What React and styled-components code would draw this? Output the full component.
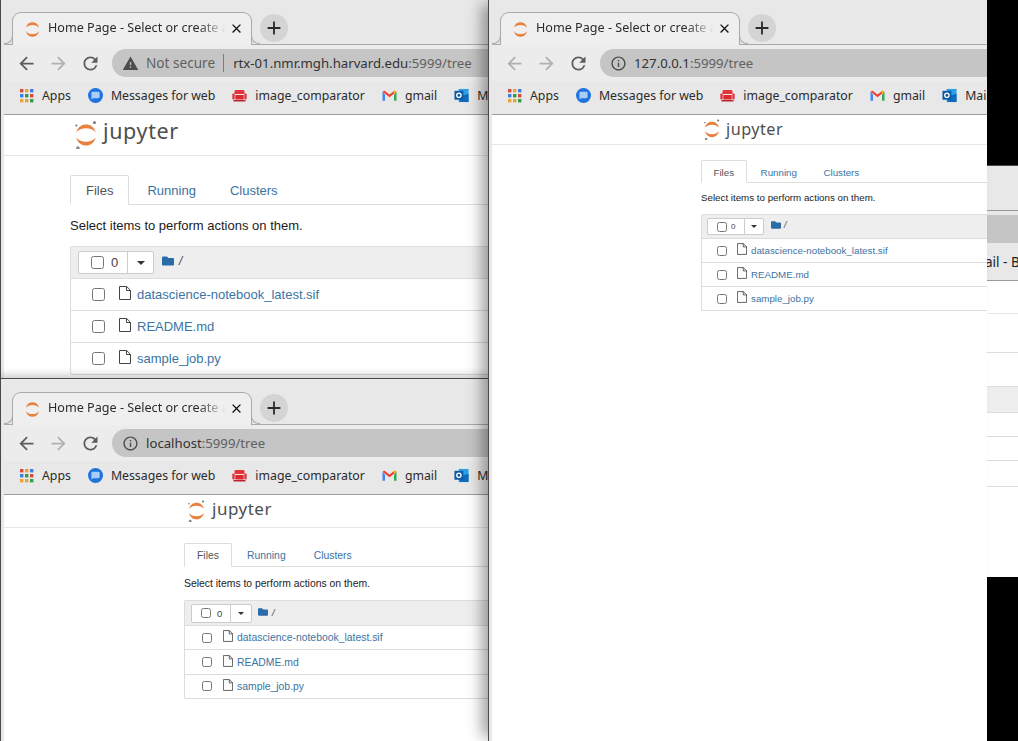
import styled, { createGlobalStyle, ThemeProvider } from 'styled-components';
import { MdArrowBack, MdArrowForward, MdRefresh, MdInfoOutline, MdWarning, MdAdd, MdClose } from 'react-icons/md';
import { FaFolder } from 'react-icons/fa';

const Global = createGlobalStyle`
  html, body { margin: 0; padding: 0; background: #000; }
`;

const chromeFont = `"Noto Sans", "Liberation Sans", sans-serif`;
const pageFont = `"Liberation Sans", Arial, sans-serif`;

const Desktop = styled.div`
  position: relative;
  width: 1018px;
  height: 741px;
  background: #000;
  overflow: hidden;
`;

/* windows on the desktop: their place is the content */
const Win = styled.div`
  position: absolute;
  left: ${(p) => p.$x}px;
  top: ${(p) => p.$y}px;
  width: ${(p) => p.$w}px;
  height: ${(p) => p.$h}px;
  z-index: ${(p) => p.$z};
  display: flex;
  flex-direction: column;
  box-sizing: border-box;
  overflow: hidden;
  background: #e8e8e8;
  border-left: 1px solid #4a4a4a;
  border-right: ${(p) => (p.$edge ? '1px solid #4a4a4a' : 'none')};
  border-top: ${(p) => (p.$top ? '1px solid #4a4a4a' : 'none')};
  box-shadow: ${(p) => p.$shadow || 'none'};
`;

const ShadowWrap = styled.div`
  position: absolute;
  left: ${(p) => p.$x}px;
  top: ${(p) => p.$y}px;
  width: ${(p) => p.$w}px;
  height: ${(p) => p.$h}px;
  z-index: ${(p) => p.$z};
  box-shadow: ${(p) => p.$shadow};
`;

const Chrome = styled.div`
  flex: none;
  font-family: ${chromeFont};
  padding-left: 3px;
`;

const TabStrip = styled.div`
  height: ${(p) => p.theme.stripH}px;
  display: flex;
  align-items: flex-end;
  padding-left: 8px;
  border-bottom: 1px solid #a9a9a9;
`;

const Tab = styled.div`
  position: relative;
  width: 240px;
  height: 33px;
  margin-bottom: -1px;
  background: #efefef;
  border: 1px solid #a9a9a9;
  border-bottom: none;
  border-radius: 9px 9px 0 0;
  display: flex;
  align-items: center;
  box-sizing: border-box;
  padding-left: 12px;
  &::before, &::after {
    content: '';
    position: absolute;
    bottom: 1px;
    width: 8px;
    height: 8px;
    border-bottom: 1px solid #a9a9a9;
  }
  &::before { left: -9px; border-right: 1px solid #a9a9a9; border-bottom-right-radius: 8px; }
  &::after { right: -9px; border-left: 1px solid #a9a9a9; border-bottom-left-radius: 8px; }
`;

const TabTitle = styled.span`
  flex: none;
  width: 180px;
  margin-left: 8px;
  padding-bottom: 3px;
  font-size: 12.6px;
  color: #2b2b2b;
  white-space: nowrap;
  overflow: hidden;
  -webkit-mask-image: linear-gradient(90deg, #000 150px, transparent 178px);
  mask-image: linear-gradient(90deg, #000 150px, transparent 178px);
`;

const TabClose = styled(MdClose)`
  flex: none;
  margin: 0 0 2px 1px;
  font-size: 15px;
  color: #111;
`;

const NewTab = styled.div`
  width: 28px;
  height: 28px;
  margin: 0 0 2px 8px;
  border-radius: 50%;
  background: #d4d4d4;
  display: flex;
  align-items: center;
  justify-content: center;
  font-size: 22px;
  color: #2b2b2b;
`;

const Toolbar = styled.div`
  height: 36px;
  display: flex;
  align-items: center;
  background: #ececec;
`;

const NavButton = styled.div`
  width: 32px;
  flex: none;
  display: flex;
  justify-content: center;
  font-size: 21px;
  color: ${(p) => (p.$off ? '#b0b0b0' : '#5a5d60')};
`;

const NavRow = styled.div`
  display: flex;
  align-items: center;
  margin-left: 6px;
`;

const Omnibox = styled.div`
  flex: 1;
  height: 28px;
  margin-left: 6px;
  border-radius: 14px 0 0 14px;
  background: #c5c5c5;
  display: flex;
  align-items: center;
  padding-left: 10px;
  font-size: 13.2px;
  white-space: nowrap;
  overflow: hidden;
  svg { flex: none; font-size: 17px; color: #4c4c4c; margin-right: 7px; }
`;

const Insecure = styled.span`
  color: #5f5f5f;
  font-size: 13.6px;
  padding-right: 8px;
  margin-right: 9px;
  border-right: 1px solid #7c7c7c;
  line-height: 18px;
`;

const Host = styled.span`
  color: #333;
`;

const Rest = styled.span`
  color: #606060;
`;

const BookmarkBar = styled.div`
  height: 33px;
  display: flex;
  align-items: center;
  gap: 17px;
  padding: 0 0 4px 15px;
  box-sizing: border-box;
  margin-bottom: 1px;
  background: #e8e8e8;
  box-shadow: 0 1px 0 #9b9b9b;
  white-space: nowrap;
  overflow: hidden;
`;

const Bookmark = styled.div`
  display: flex;
  align-items: center;
  gap: 8px;
  font-size: 12.3px;
  color: #2b2b2b;
  svg { flex: none; width: 15px; height: 15px; }
`;

const Page = styled.div`
  flex: 1;
  min-height: 0;
  margin-left: 3px;
  background: #fff;
  font-family: ${pageFont};
  font-size: ${(p) => p.theme.font}px;
  overflow: hidden;
`;

const Header = styled.div`
  height: ${(p) => p.theme.headerH}px;
  box-sizing: border-box;
  display: flex;
  align-items: center;
  gap: ${(p) => p.theme.brandGap}px;
  padding-left: ${(p) => p.theme.brandLeft}px;
  border-bottom: 1px solid #e7e7e7;
`;

const Brand = styled.span`
  font-family: "Noto Sans", sans-serif;
  font-size: ${(p) => p.theme.brandFont}px;
  line-height: 1;
  letter-spacing: 0.03em;
  margin-top: -${(p) => p.theme.brandLift}px;
  color: #4e4e4e;
`;

const Container = styled.div`
  padding-left: ${(p) => p.theme.contentLeft}px;
  padding-top: ${(p) => p.theme.tabsTop}px;
`;

const Tabs = styled.div`
  display: flex;
  gap: ${(p) => p.theme.tabGap}px;
  border-bottom: 1px solid #ddd;
`;

const PageTab = styled.div`
  height: ${(p) => p.theme.tabH}px;
  box-sizing: border-box;
  display: flex;
  align-items: center;
  padding: ${(p) => p.theme.tabNudge}px ${(p) => p.theme.tabPad}px 0;
  margin-bottom: -1px;
  border: 1px solid ${(p) => (p.$active ? '#ddd' : 'transparent')};
  border-bottom-color: ${(p) => (p.$active ? '#fff' : 'transparent')};
  border-radius: 2px 2px 0 0;
  background: ${(p) => (p.$active ? '#fff' : 'transparent')};
  color: ${(p) => (p.$active ? '#555' : '#3a74a5')};
`;

const Hint = styled.div`
  margin: ${(p) => p.theme.hintTop}px 0 ${(p) => p.theme.hintBottom}px;
  color: #1c1c1c;
  line-height: ${(p) => p.theme.hintLine}px;
`;

const List = styled.div`
  border: 1px solid #ddd;
  border-right: none;
  border-radius: 2px 0 0 2px;
`;

const ListHead = styled.div`
  height: ${(p) => p.theme.headH}px;
  box-sizing: border-box;
  display: flex;
  align-items: center;
  padding-left: ${(p) => p.theme.btnLeft}px;
  background: #eee;
  border-bottom: 1px solid #ddd;
  color: #333;
`;

const SelectGroup = styled.div`
  display: flex;
  height: ${(p) => p.theme.btnH}px;
  box-sizing: border-box;
  background: #fff;
  border: 1px solid #ccc;
  border-radius: 2px;
`;

const SelectBox = styled.div`
  width: ${(p) => p.theme.btnW}px;
  box-sizing: border-box;
  display: flex;
  align-items: center;
  padding-left: ${(p) => p.theme.btnPad}px;
  gap: ${(p) => p.theme.btnGap}px;
  font-size: ${(p) => p.theme.countFont}px;
  color: #444;
  border-right: 1px solid #ccc;
`;

const Caret = styled.div`
  width: ${(p) => p.theme.caretW}px;
  display: flex;
  align-items: center;
  justify-content: center;
  &::after {
    content: '';
    border-top: ${(p) => p.theme.caret}px solid #333;
    border-left: ${(p) => p.theme.caret}px solid transparent;
    border-right: ${(p) => p.theme.caret}px solid transparent;
  }
`;

const Crumb = styled.div`
  display: flex;
  align-items: center;
  gap: ${(p) => p.theme.crumbGap}px;
  margin: -${(p) => p.theme.crumbLift}px 0 0 ${(p) => p.theme.crumbLeft}px;
  font-style: italic;
  font-size: ${(p) => p.theme.font - 1}px;
  color: #444;
  svg { color: #2a6ca8; font-size: ${(p) => p.theme.folder}px; }
`;

const Check = styled.input.attrs({ type: 'checkbox', readOnly: true })`
  width: ${(p) => p.theme.check}px;
  height: ${(p) => p.theme.check}px;
  margin: 0;
  flex: none;
`;

const Row = styled.div`
  height: ${(p) => p.theme.rowH}px;
  box-sizing: border-box;
  display: flex;
  align-items: center;
  padding-left: ${(p) => p.theme.rowCheck}px;
  border-bottom: 1px solid #ddd;
  &:last-child { border-bottom: none; height: ${(p) => p.theme.rowH - 1}px; }
`;

const FileGlyph = styled.svg`
  flex: none;
  width: ${(p) => p.theme.fileW}px;
  height: ${(p) => p.theme.fileH}px;
  margin: -${(p) => p.theme.fileLift}px 0 0 ${(p) => p.theme.fileLeft}px;
  color: #444;
`;

const FileName = styled.span`
  margin-left: ${(p) => p.theme.nameLeft}px;
  color: #3a74a5;
  white-space: nowrap;
`;

/* the window behind, only a strip of it shows at the right */
const BackStrip = styled.div`
  height: ${(p) => (p.$fill ? 'auto' : `${p.$h}px`)};
  flex: ${(p) => (p.$fill ? 1 : 'none')};
  box-sizing: border-box;
  background: ${(p) => p.$bg || '#fff'};
  border-bottom: ${(p) => (p.$line ? `1px solid ${p.$line}` : 'none')};
  font-family: ${chromeFont};
  font-size: 13.5px;
  color: #222;
  white-space: nowrap;
  display: flex;
  align-items: center;
  padding-left: 24px;
`;

function JupyterMark({ dots, ...rest }) {
  return (
    <svg viewBox="0 0 22 28" {...rest}>
      <path fill="#e8803f" d="M1.200 11.500C2.800 6 6.600 3.400 11 3.400s8.200 2.600 9.800 8.100C18.200 8.600 15 7.300 11 7.300S3.800 8.600 1.200 11.500Z" />
      <path fill="#e8803f" d="M1.200 16.500C2.800 22 6.600 24.600 11 24.600s8.200-2.600 9.800-8.100C18.200 19.400 15 20.700 11 20.700S3.800 19.400 1.200 16.500Z" />
      {dots && (
        <>
          <circle cx="19.500" cy="1.700" r="1.400" fill="#6e6e6e" />
          <circle cx="1.300" cy="4.600" r="1" fill="#6e6e6e" />
          <circle cx="2.900" cy="27" r="1.800" fill="#8a8a8a" />
        </>
      )}
    </svg>
  );
}

const AppsIcon = () => {
  const colors = ['#d9493c', '#e8a33d', '#3f7fdc', '#3f7fdc', '#2f9e55', '#d9493c', '#e8a33d', '#e8a33d', '#2f9e55'];
  return (
    <svg viewBox="0 0 15 15">
      {colors.map((c, i) => (
        <rect key={i} x={1 + (i % 3) * 5} y={1 + Math.floor(i / 3) * 5} width="3.400" height="3.400" fill={c} />
      ))}
    </svg>
  );
};

const MessagesIcon = () => (
  <svg viewBox="0 0 15 15">
    <circle cx="7.500" cy="7.500" r="7.500" fill="#1f73e0" />
    <path d="M3.400 5c0-.7.5-1.200 1.200-1.200h5.800c.7 0 1.200.5 1.200 1.200v4c0 .7-.5 1.200-1.200 1.200H5L3.400 11.600Z" fill="#a9cdf7" />
  </svg>
);

const SofaIcon = () => (
  <svg viewBox="0 0 15 15">
    <path d="M2.500 3.400C2.500 2.600 3.200 2 4 2h7c.8 0 1.500.6 1.500 1.400V6H2.500Z" fill="#e5343c" />
    <rect x="0.300" y="5.500" width="2.400" height="6" rx="1" fill="#e5343c" />
    <rect x="12.300" y="5.500" width="2.400" height="6" rx="1" fill="#e5343c" />
    <rect x="3.300" y="7" width="8.400" height="4.500" fill="#d92a32" />
    <rect x="1.500" y="12" width="12" height="1.500" fill="#b9232a" />
  </svg>
);

const GmailIcon = () => (
  <svg viewBox="0 0 15 15">
    <path d="M0.500 3.800V12.800H3V6.500Z" fill="#4285f4" />
    <path d="M12 6.500V12.800H14.500V3.800Z" fill="#34a853" />
    <path d="M0.500 3.800 2.200 2.400 7.500 6.500 12.800 2.400 14.500 3.800 7.500 9.200Z" fill="#ea4335" />
    <path d="M12 3.200 12.800 2.400 14.500 3.800 12 5.800Z" fill="#fbbc04" />
  </svg>
);

const OutlookIcon = () => (
  <svg viewBox="0 0 16 16">
    <rect x="5" y="1" width="10.500" height="14" fill="#2aa0e6" />
    <path d="M6 9 15.500 6V15H6Z" fill="#0f6cbd" />
    <rect x="0.500" y="3" width="9.500" height="9.500" fill="#0b5aa8" />
    <circle cx="5.200" cy="7.700" r="2.300" fill="none" stroke="#fff" strokeWidth="1.400" />
  </svg>
);

const FileIcon = () => (
  <FileGlyph viewBox="0 0 12 14" fill="none" stroke="currentColor" strokeWidth="1">
    <path d="M.5.500h7.200l3.800 3.800v9.200H.5ZM7.500.500v4h4" />
  </FileGlyph>
);

function Browser({ host, rest, insecure, backOff, children }) {
  return (
    <>
      <Chrome>
        <TabStrip>
          <Tab>
            <JupyterMark width="15" height="19" style={{ flex: 'none' }} />
            <TabTitle>Home Page - Select or create a notebook</TabTitle>
            <TabClose />
          </Tab>
          <NewTab><MdAdd /></NewTab>
        </TabStrip>
        <Toolbar>
          <NavRow>
            <NavButton $off={backOff}><MdArrowBack /></NavButton>
            <NavButton $off><MdArrowForward /></NavButton>
            <NavButton><MdRefresh /></NavButton>
          </NavRow>
          <Omnibox>
            {insecure ? <MdWarning /> : <MdInfoOutline />}
            {insecure && <Insecure>Not secure</Insecure>}
            <Host>{host}</Host>
            <Rest>{rest}</Rest>
          </Omnibox>
        </Toolbar>
        <BookmarkBar>
          <Bookmark><AppsIcon />Apps</Bookmark>
          <Bookmark><MessagesIcon />Messages for web</Bookmark>
          <Bookmark><SofaIcon />image_comparator</Bookmark>
          <Bookmark><GmailIcon />gmail</Bookmark>
          <Bookmark><OutlookIcon />Mail</Bookmark>
        </BookmarkBar>
      </Chrome>
      <Page>{children}</Page>
    </>
  );
}

const JupyterMarkSized = styled(JupyterMark).attrs({ dots: true })`
  flex: none;
  width: ${(p) => p.theme.logoW}px;
  height: ${(p) => p.theme.logoH}px;
`;

function JupyterTree() {
  return (
    <>
      <Header>
        <JupyterMarkSized />
        <Brand>jupyter</Brand>
      </Header>
      <Container>
        <Tabs>
          <PageTab $active>Files</PageTab>
          <PageTab>Running</PageTab>
          <PageTab>Clusters</PageTab>
        </Tabs>
        <Hint>Select items to perform actions on them.</Hint>
        <List>
          <ListHead>
            <SelectGroup>
              <SelectBox><Check />0</SelectBox>
              <Caret />
            </SelectGroup>
            <Crumb><FaFolder />/</Crumb>
          </ListHead>
          {['datascience-notebook_latest.sif', 'README.md', 'sample_job.py'].map((name) => (
            <Row key={name}>
              <Check />
              <FileIcon />
              <FileName>{name}</FileName>
            </Row>
          ))}
        </List>
      </Container>
    </>
  );
}

const full = {
  stripH: 44, font: 13,
  headerH: 41, brandLeft: 71, brandGap: 6, brandFont: 21.5, brandLift: 9, logoW: 22, logoH: 28,
  contentLeft: 66, tabsTop: 19, tabH: 30, tabPad: 15, tabGap: 2, tabNudge: 0,
  hintTop: 12, hintBottom: 11, hintLine: 18,
  headH: 32, btnLeft: 7, btnH: 23, btnW: 49, btnPad: 12, btnGap: 7, caretW: 25, caret: 4, countFont: 13,
  crumbLeft: 8, crumbGap: 5, crumbLift: 3, folder: 12, check: 13,
  rowH: 32, rowCheck: 21, fileLeft: 14, fileW: 12, fileH: 14, fileLift: 3, nameLeft: 6,
};

const localhost = {
  stripH: 45, font: 10.4,
  headerH: 33, brandLeft: 184, brandGap: 7, brandFont: 17, brandLift: 5, logoW: 17, logoH: 22,
  contentLeft: 180, tabsTop: 15, tabH: 24, tabPad: 12, tabGap: 2, tabNudge: 0,
  hintTop: 9, hintBottom: 9, hintLine: 15,
  headH: 25, btnLeft: 6, btnH: 19, btnW: 39, btnPad: 9, btnGap: 6, caretW: 20, caret: 3.5, countFont: 9.5,
  crumbLeft: 6, crumbGap: 4, crumbLift: 2, folder: 10, check: 10,
  rowH: 24.4, rowCheck: 17, fileLeft: 11, fileW: 10, fileH: 12, fileLift: 3, nameLeft: 4,
};

const loopback = {
  stripH: 44, font: 9.75,
  headerH: 30, brandLeft: 212, brandGap: 6, brandFont: 16.2, brandLift: 1, logoW: 16, logoH: 21,
  contentLeft: 209, tabsTop: 15, tabH: 23, tabPad: 11.5, tabGap: 1.5, tabNudge: 1,
  hintTop: 8, hintBottom: 9, hintLine: 14,
  headH: 24, btnLeft: 5, btnH: 17, btnW: 37, btnPad: 9, btnGap: 4, caretW: 18, caret: 3, countFont: 8,
  crumbLeft: 7, crumbGap: 3, crumbLift: 3, folder: 10, check: 10,
  rowH: 24, rowCheck: 15, fileLeft: 10, fileW: 10, fileH: 12, fileLift: 3, nameLeft: 4,
};

export default function App() {
  return (
    <Desktop>
      <Global />

      <Win $x={960} $y={165} $w={58} $h={412} $z={0} $top>
        <BackStrip $h={45} $bg="#e8e8e8" $line="#9b9b9b" />
        <BackStrip $h={4} $bg="#e8e8e8" />
        <BackStrip $h={28} $bg="#c5c5c5" />
        <BackStrip $h={38} $bg="#e8e8e8" $line="#9b9b9b">ail - Brain</BackStrip>
        <BackStrip $h={33} $line="#e7e7e7" />
        <BackStrip $h={39} $line="#ddd" />
        <BackStrip $h={34} $line="#ddd" />
        <BackStrip $h={26} $bg="#eee" $line="#ddd" />
        <BackStrip $h={24} $line="#ddd" />
        <BackStrip $h={24} $line="#ddd" />
        <BackStrip $h={26} $line="#ddd" />
        <BackStrip $fill />
      </Win>

      <Win $x={0} $y={0} $w={489} $h={379} $z={1} $edge>
        <ThemeProvider theme={full}>
          <Browser host="rtx-01.nmr.mgh.harvard.edu" rest=":5999/tree" insecure>
            <JupyterTree />
          </Browser>
        </ThemeProvider>
      </Win>

      <Win $x={0} $y={378} $w={489} $h={363} $z={2} $top $edge $shadow="0 -3px 8px rgba(0,0,0,0.22)">
        <ThemeProvider theme={localhost}>
          <Browser host="localhost" rest=":5999/tree">
            <JupyterTree />
          </Browser>
        </ThemeProvider>
      </Win>

      <ShadowWrap $x={488} $y={0} $w={499} $h={741} $z={3} $shadow="-10px 0 14px -4px rgba(0,0,0,0.38)">
        <Win $x={0} $y={0} $w={499} $h={741} $z={3}>
          <ThemeProvider theme={loopback}>
            <Browser host="127.0.0.1" rest=":5999/tree" backOff>
              <JupyterTree />
            </Browser>
          </ThemeProvider>
        </Win>
      </ShadowWrap>
    </Desktop>
  );
}
